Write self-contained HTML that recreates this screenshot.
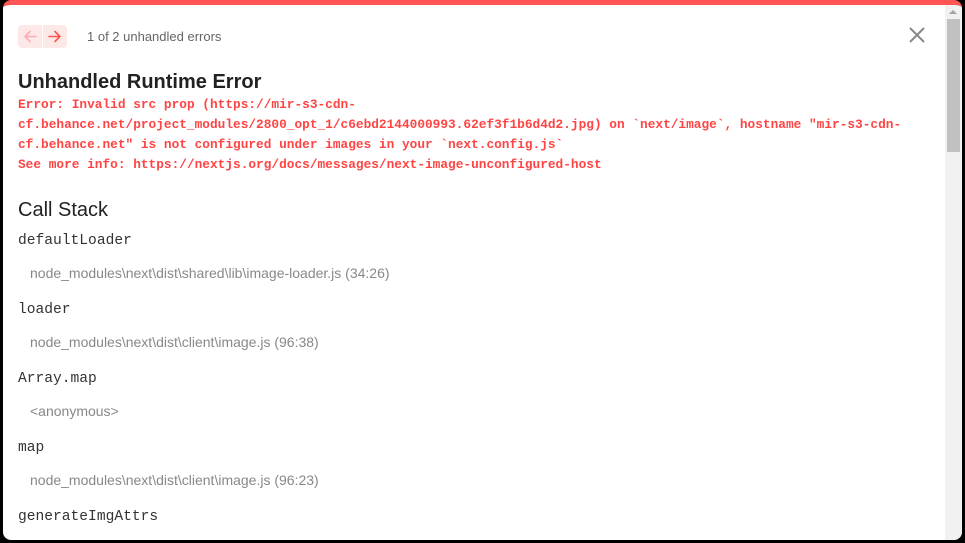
<!DOCTYPE html>
<html><head><style>
body{margin:0;width:965px;height:543px;background:#000;overflow:hidden;font-family:"Liberation Sans",sans-serif;}
.panel{position:absolute;left:3px;top:0;width:959px;height:540px;background:#fff;border-radius:8px;border-top:5px solid #ff5555;box-sizing:border-box;overflow:hidden}
.nav{position:absolute;left:15px;top:20px;width:49px;height:23px;background:#fde8e8;border-radius:4px}
.cnt{position:absolute;left:84px;top:24px;font-size:13px;color:#666}
h1{position:absolute;left:15px;top:66px;margin:0;font-size:20px;font-weight:bold;color:#222}
.err{position:absolute;left:15px;top:90px;font-family:"Liberation Mono",monospace;font-size:12.8px;line-height:20px;color:#ff4444;font-weight:bold;white-space:pre;margin:0}
h2{position:absolute;left:15px;top:194px;margin:0;font-size:20px;font-weight:normal;color:#222}
.fn{position:absolute;left:15px;font-family:"Liberation Mono",monospace;font-size:14.6px;color:#333}
.p{position:absolute;left:27px;font-size:14px;color:#888}
.sb{position:absolute;left:942px;top:0;width:17px;height:540px;background:#f1f1f1}
.th{position:absolute;left:2px;top:14px;width:13px;height:133px;background:#c1c1c1}
</style></head><body>
<div class="panel">
<div class="nav">
<svg width="49" height="23" style="position:absolute;left:0;top:0"><g fill="none" stroke-width="1.6" stroke-linecap="round" stroke-linejoin="round"><path d="M7 11.5h11M12 6.5l-5 5 5 5" stroke="#fab"/><path d="M31 11.5h11M37 6.5l5 5-5 5" stroke="#f55"/></g><line x1="24.5" y1="0" x2="24.5" y2="23" stroke="#fff"/></svg>
</div>
<div class="cnt">1 of 2 unhandled errors</div>
<svg width="18" height="18" style="position:absolute;left:905px;top:21px"><path d="M2 2L16 16M16 2L2 16" stroke="#888" stroke-width="2"/></svg>
<h1>Unhandled Runtime Error</h1>
<pre class="err">Error: Invalid src prop (https://mir-s3-cdn-
cf.behance.net/project_modules/2800_opt_1/c6ebd2144000993.62ef3f1b6d4d2.jpg) on `next/image`, hostname "mir-s3-cdn-
cf.behance.net" is not configured under images in your `next.config.js`
See more info: https://nextjs.org/docs/messages/next-image-unconfigured-host</pre>
<h2>Call Stack</h2>
<div class="fn" style="top:228px">defaultLoader</div>
<div class="p" style="top:260px">node_modules\next\dist\shared\lib\image-loader.js (34:26)</div>
<div class="fn" style="top:297px">loader</div>
<div class="p" style="top:329px">node_modules\next\dist\client\image.js (96:38)</div>
<div class="fn" style="top:366px">Array.map</div>
<div class="p" style="top:398px">&lt;anonymous&gt;</div>
<div class="fn" style="top:435px">map</div>
<div class="p" style="top:467px">node_modules\next\dist\client\image.js (96:23)</div>
<div class="fn" style="top:504px">generateImgAttrs</div>
<div class="sb"><div style="position:absolute;left:4px;top:5px;border:4px solid transparent;border-bottom-color:#a3a3a3;border-top:0"></div><div class="th"></div></div>
</div>
</body></html>
